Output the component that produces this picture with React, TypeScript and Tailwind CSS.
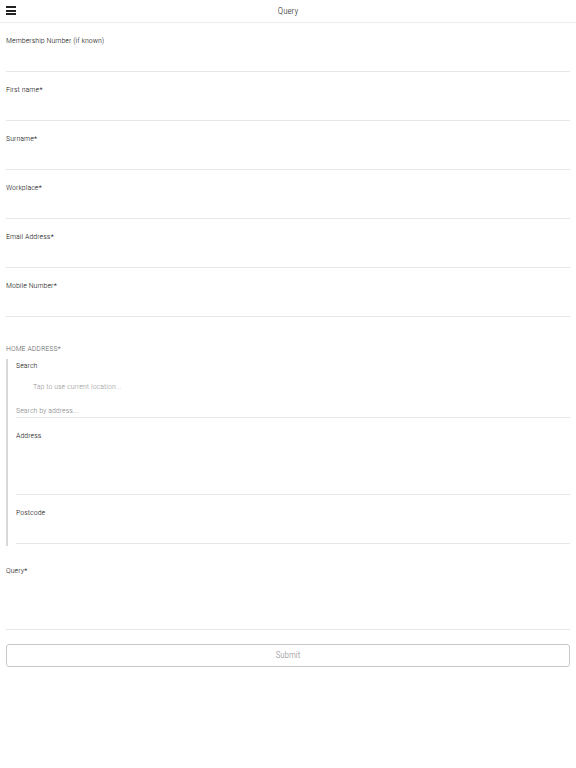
import React from "react";

const font = { fontFamily: '"Roboto Condensed", Roboto, "Liberation Sans", sans-serif', fontWeight: 300 };

function Field({ label, tall }: { label: string; tall?: boolean }) {
  return (
    <div className={`${tall ? "h-[77px]" : "h-[49px]"} border-b border-[#e6e6e6] pt-[13px]`}>
      <div className="text-[8px] leading-[10px] text-[#111]">{label}</div>
    </div>
  );
}

export default function App() {
  return (
    <div className="w-[576px] h-[768px] bg-white" style={font}>
      <div className="h-[23px] border-b border-[#ececec] flex items-center relative">
        <div className="absolute left-[6px] top-[6px] w-[10px] flex flex-col gap-[1.5px]">
          <div className="h-[2px] bg-[#222]" />
          <div className="h-[2px] bg-[#222]" />
          <div className="h-[2px] bg-[#222]" />
        </div>
        <div className="w-full text-center text-[9px] leading-[10px] text-[#222]">Query</div>
      </div>
      <div className="px-[6px]">
        <Field label="Membership Number (if known)" />
        <Field label="First name*" />
        <Field label="Surname*" />
        <Field label="Workplace*" />
        <Field label="Email Address*" />
        <Field label="Mobile Number*" />
        <div className="pt-[27px] text-[8px] leading-[10px] text-[#666] uppercase">Home Address*</div>
        <div className="mt-[5px] border-l-[2px] border-[#d8d8d8] pl-[8px]">
          <div className="pt-[2px] text-[8px] leading-[10px] text-[#111]">Search</div>
          <div className="pt-[11px] pl-[17px] text-[8px] leading-[10px] text-[#999]">Tap to use current location...</div>
          <div className="pt-[14px] pb-[1px] border-b border-[#e6e6e6] text-[8px] leading-[10px] text-[#888]">Search by address...</div>
          <Field label="Address" tall />
          <Field label="Postcode" />
          <div className="h-[2px]" />
        </div>
        <div className="h-[7px]" />
        <Field label="Query*" tall />
        <div className="mt-[14px] h-[23px] border border-[#c8c8c8] rounded-[3px] flex items-center justify-center text-[9px] text-[#888]">
          Submit
        </div>
      </div>
    </div>
  );
}
